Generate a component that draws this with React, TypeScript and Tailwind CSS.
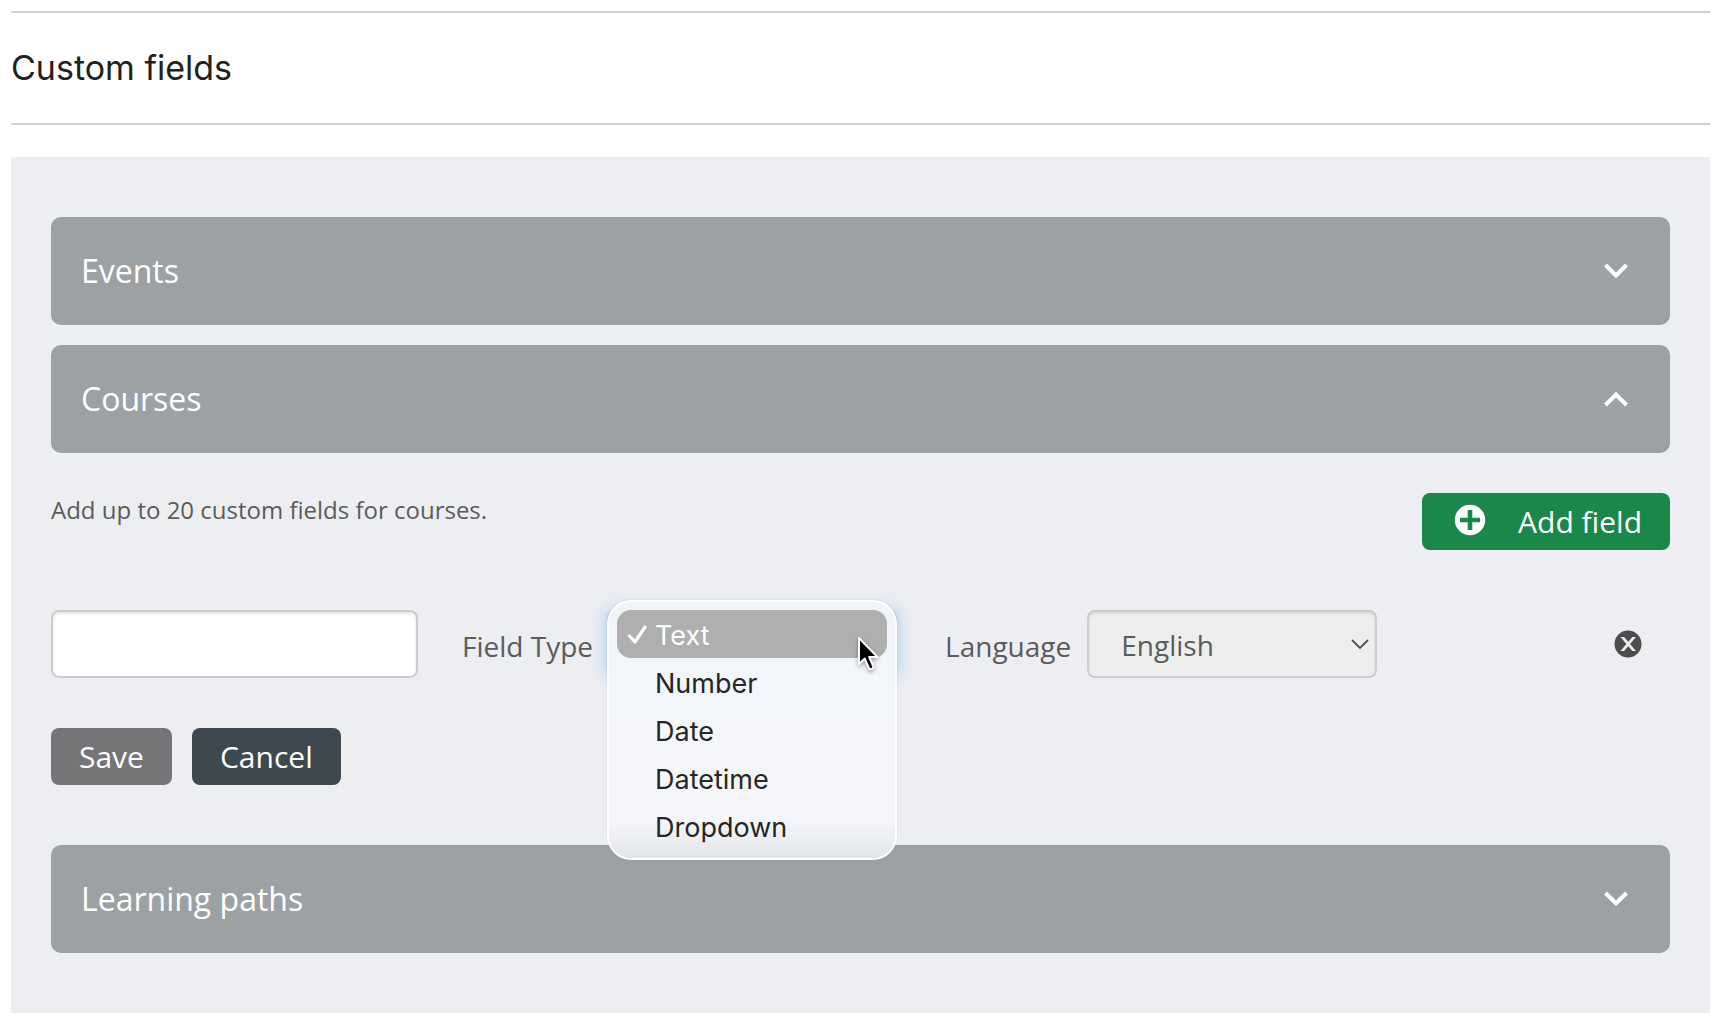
import { useState } from 'react';
import clsx from 'clsx';

const FIELD_TYPES = ['Text', 'Number', 'Date', 'Datetime', 'Dropdown'];

function Chevron({ up }: { up?: boolean }) {
  return (
    <svg width="24" height="16" viewBox="0 0 24 16" fill="none" aria-hidden="true">
      <path d={up ? 'M1.500 14 12 3.500 22.500 14' : 'M1.500 2 12 12.500 22.500 2'} stroke="white" strokeWidth="4" />
    </svg>
  );
}

function SectionBar({ title, open }: { title: string; open?: boolean }) {
  return (
    <button
      type="button"
      aria-expanded={!!open}
      className="flex h-[108px] w-full items-center justify-between rounded-[10px] bg-[#9ca1a4] pr-[42px] pl-[30px] text-left text-[32px] leading-10 text-white"
    >
      {title}
      <Chevron up={open} />
    </button>
  );
}

function Cursor() {
  return (
    <svg
      className="pointer-events-none absolute top-[34px] right-[14px] drop-shadow-[0_2px_2px_rgba(0,0,0,0.35)]"
      width="24"
      height="36"
      viewBox="0 0 24 36"
      aria-hidden="true"
    >
      <path
        d="M2 2v26l5.800-5.400 4 9.200c.5 1.300 1.600 1.600 2.800 1.100 1.500-.6 2.100-1.600 1.500-2.900L12.200 21H20.500Z"
        fill="black"
        stroke="white"
        strokeWidth="2"
        strokeLinejoin="round"
      />
    </svg>
  );
}

function FieldTypeMenu({ value, onChange }: { value: string; onChange: (type: string) => void }) {
  return (
    <div
      role="listbox"
      aria-label="Field Type"
      className="absolute -top-[10px] left-0 z-10 w-full rounded-[24px] border-2 border-white/90 bg-linear-to-b from-[#f1f5fa] via-[#f5f6fa] via-85% to-[#e3e6e8] p-2 font-['Inter',sans-serif] shadow-[0_0_2px_rgba(0,0,0,0.12)]"
    >
      {FIELD_TYPES.map((type) => (
        <button
          key={type}
          type="button"
          role="option"
          aria-selected={type === value}
          onClick={() => onChange(type)}
          className={clsx(
            'flex h-12 w-full items-center rounded-[14px] pt-1 pl-[10px] text-left text-[27px] leading-8',
            type === value ? 'bg-[#afafaf] text-white' : 'text-[#262626]',
          )}
        >
          <span className="mb-1 flex w-[28px] shrink-0">
            {type === value && (
              <svg width="21" height="20" viewBox="0 0 21 20" fill="none" aria-hidden="true">
                <path
                  d="M2.500 12 8 18 18 3"
                  stroke="white"
                  strokeWidth="3.200"
                  strokeLinecap="round"
                  strokeLinejoin="round"
                />
              </svg>
            )}
          </span>
          {type}
        </button>
      ))}
      <Cursor />
    </div>
  );
}

export default function App() {
  const [fieldType, setFieldType] = useState('Text');

  return (
    <main className="min-h-screen bg-white pt-[11px] pr-[14px] pb-4 pl-[11px] font-['Open_Sans',sans-serif] text-[#5b5b5b]">
      <header className="border-y-2 border-[#d0d0d0] py-[33px]">
        <h1 className="font-['Inter',sans-serif] text-[34px] leading-[44px] text-[#212121]">Custom fields</h1>
      </header>

      <section className="mt-8 bg-[#edeef2] px-10 py-[60px]">
        <SectionBar title="Events" />

        <div className="mt-5">
          <SectionBar title="Courses" open />

          <div className="mt-10 flex items-start justify-between">
            <p className="text-2xl leading-[34px]">Add up to 20 custom fields for courses.</p>
            <button
              type="button"
              className="flex h-[57px] items-center rounded-lg bg-[#1b874b] pr-7 pl-8 text-[30px] leading-10 text-white"
            >
              <svg className="mr-8 mb-1" width="32" height="32" viewBox="0 0 32 32" aria-hidden="true">
                <circle cx="16" cy="16" r="15.200" fill="white" />
                <path d="M16 6v20M6 16h20" stroke="#1b874b" strokeWidth="4.600" />
              </svg>
              Add field
            </button>
          </div>

          <div className="mt-[60px] flex items-center">
            <input
              type="text"
              aria-label="Field name"
              className="h-[68px] w-[367px] rounded-lg border-2 border-[#cccccc] bg-white px-4 text-[28px] shadow-[inset_0_2px_3px_rgba(0,0,0,0.1)] outline-none"
            />

            <label htmlFor="field-type" className="mr-[14px] ml-11 pt-1 text-[28px] leading-10">
              Field Type
            </label>
            <div className="relative w-[290px]">
              <select
                id="field-type"
                value={fieldType}
                onChange={(e) => setFieldType(e.target.value)}
                className="block h-[68px] w-full appearance-none rounded-lg border-2 border-[#b9cde0] bg-[#eeeeee] pl-8 text-[28px] text-transparent shadow-[0_0_16px_rgba(102,175,233,0.6)] outline-none"
              >
                {FIELD_TYPES.map((type) => (
                  <option key={type}>{type}</option>
                ))}
              </select>
              <FieldTypeMenu value={fieldType} onChange={setFieldType} />
            </div>

            <label htmlFor="language" className="mr-4 ml-12 pt-1 text-[28px] leading-10">
              Language
            </label>
            <div className="relative w-[290px]">
              <select
                id="language"
                className="block h-[68px] w-full appearance-none rounded-lg border-2 border-[#cccccc] bg-[#eeeeee] pt-0.5 pl-8 text-[28px] shadow-[inset_0_2px_3px_rgba(0,0,0,0.08)] outline-none"
              >
                <option>English</option>
              </select>
              <svg
                className="pointer-events-none absolute top-7 right-[7px]"
                width="20"
                height="12"
                viewBox="0 0 20 12"
                fill="none"
                aria-hidden="true"
              >
                <path d="M2 2l8 8 8-8" stroke="#505050" strokeWidth="1.800" />
              </svg>
            </div>

            <button type="button" aria-label="Remove field" className="mr-7 ml-auto">
              <svg width="28" height="28" viewBox="0 0 28 28" aria-hidden="true">
                <circle cx="14" cy="14" r="13.500" fill="#4d4d4d" />
                <path
                  d="M6.500 7h3.600L22 21h-3.600ZM18.400 7H22L10.100 21H6.500Z"
                  fill="#edeef2"
                />
              </svg>
            </button>
          </div>

          <div className="mt-[50px] flex gap-5 text-[30px] leading-10 text-white">
            <button type="button" className="h-[57px] rounded-lg bg-[#757577] px-7">
              Save
            </button>
            <button type="button" className="h-[57px] rounded-lg bg-[#3d494e] px-7">
              Cancel
            </button>
          </div>
        </div>

        <div className="mt-[60px]">
          <SectionBar title="Learning paths" />
        </div>
      </section>
    </main>
  );
}
